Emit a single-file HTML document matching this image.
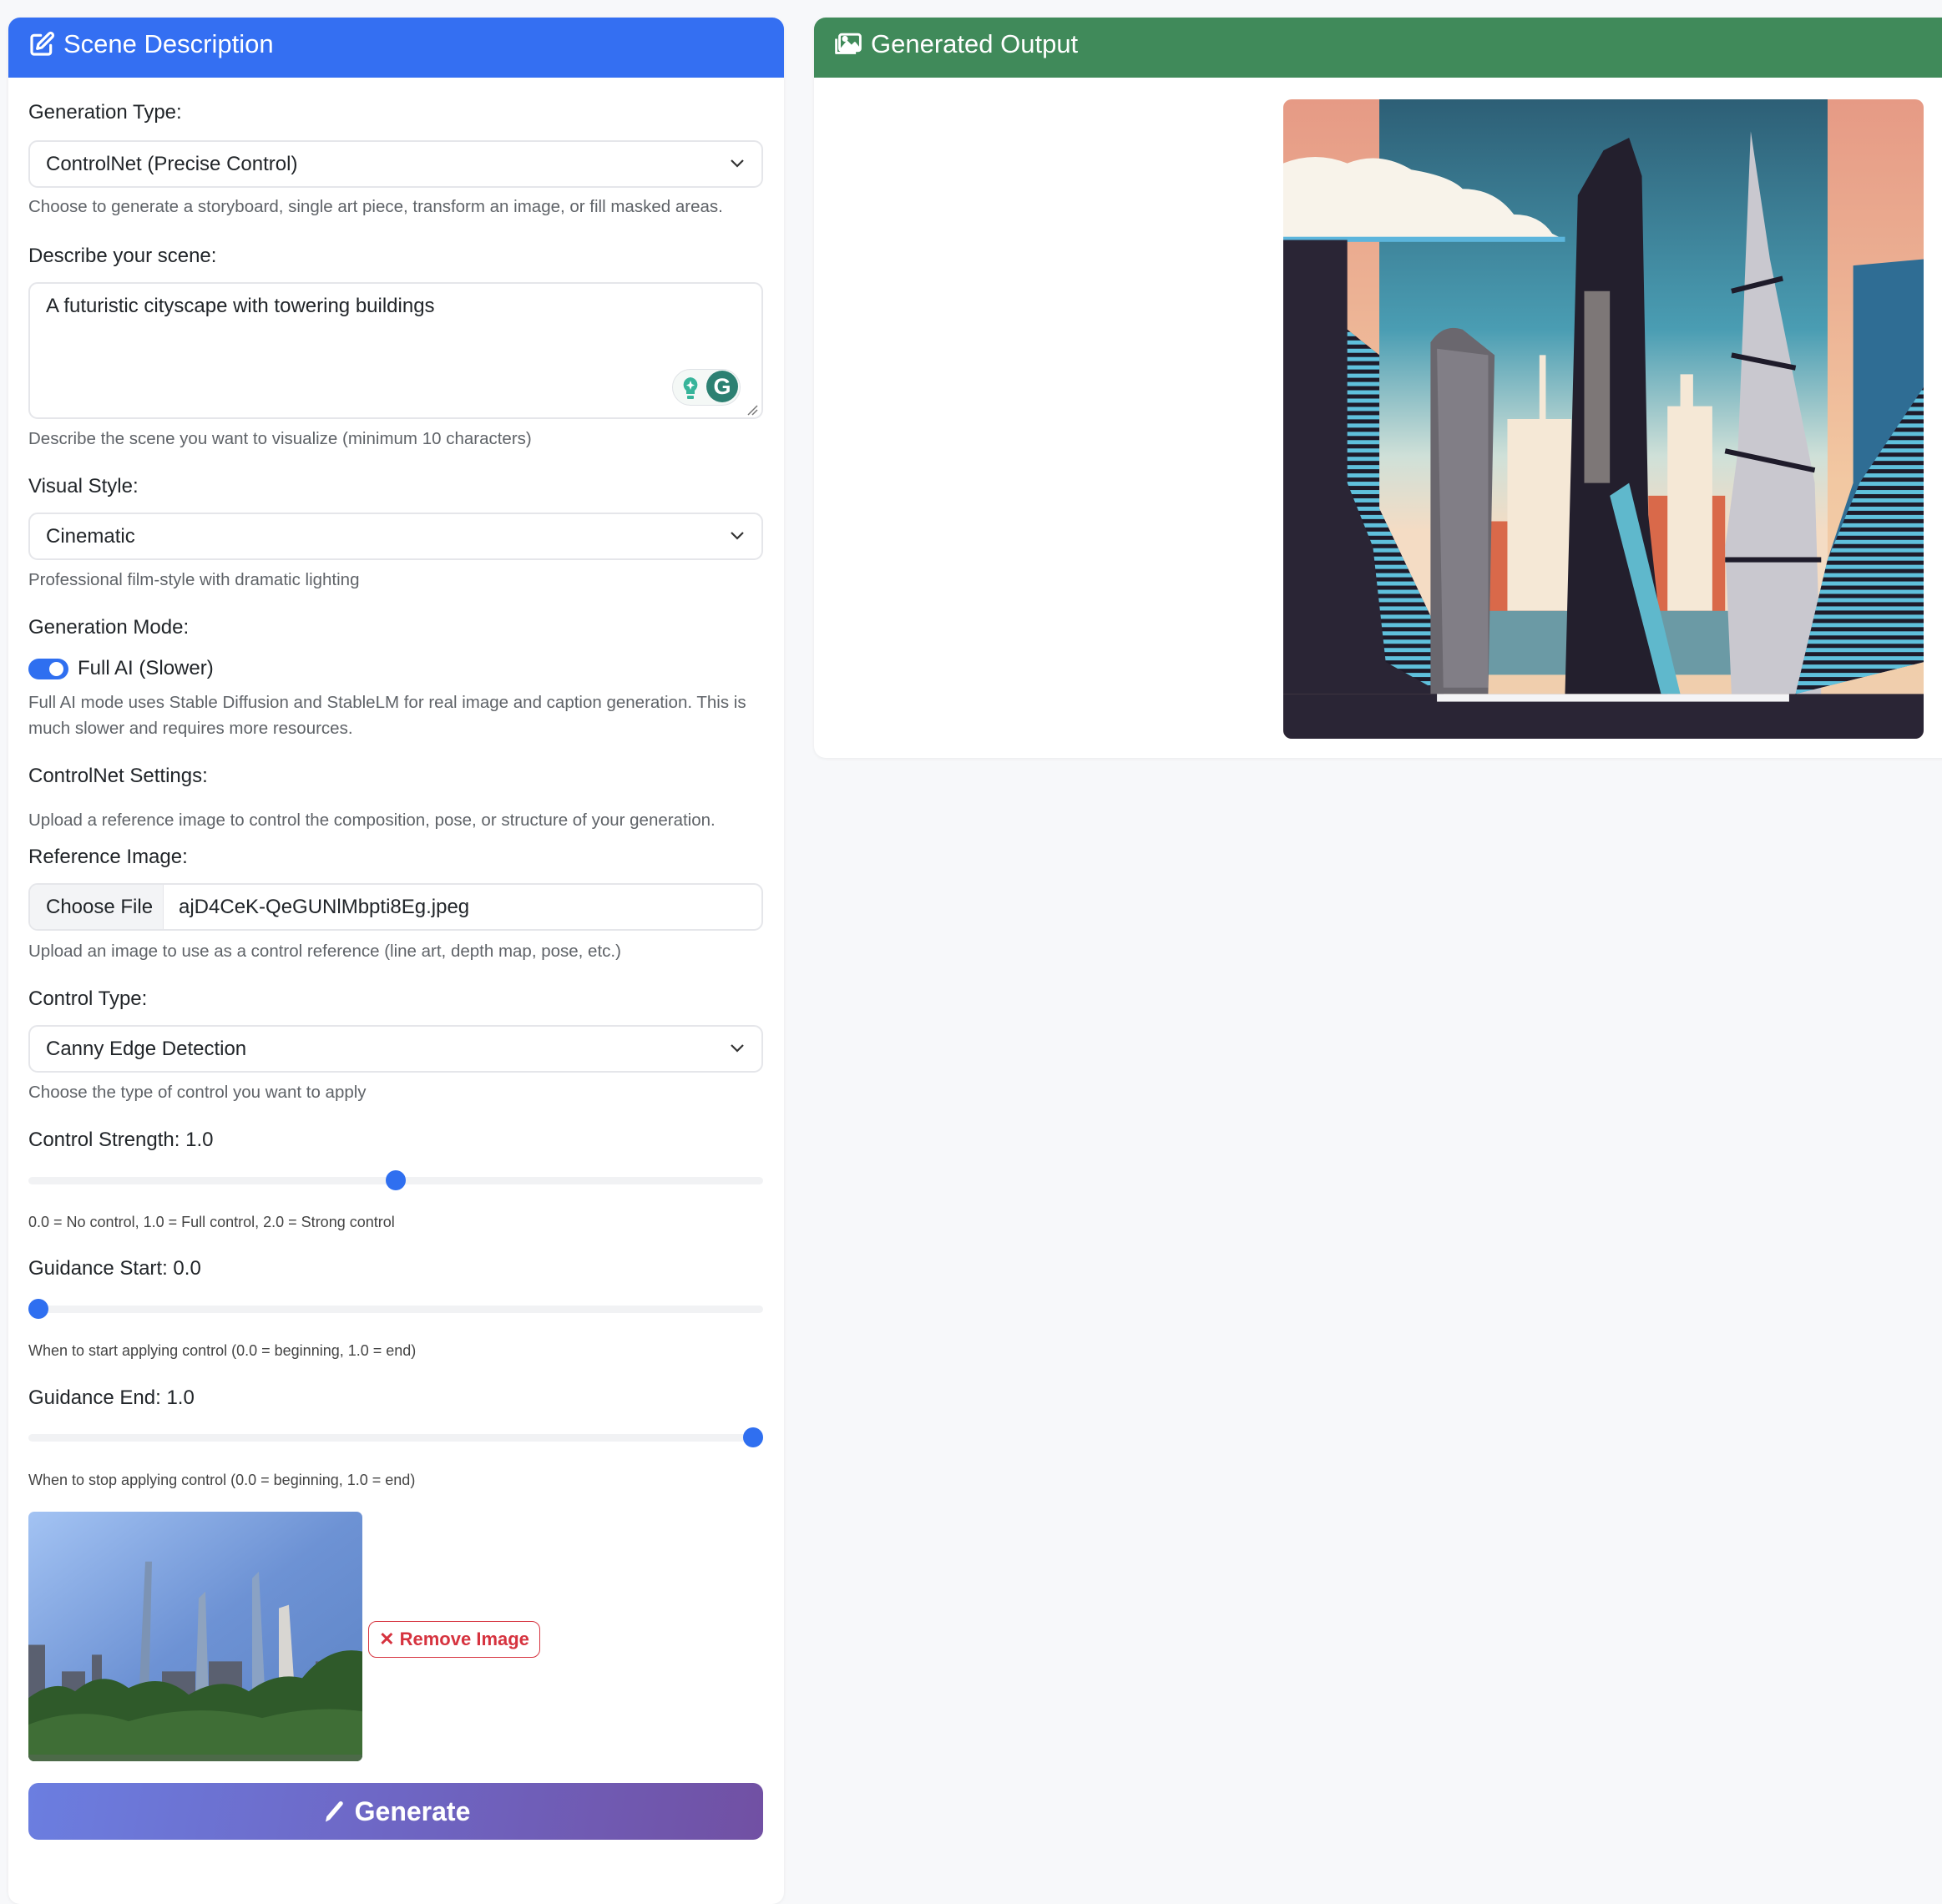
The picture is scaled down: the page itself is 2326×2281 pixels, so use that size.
<!DOCTYPE html>
<html><head><meta charset="utf-8"><style>
*{box-sizing:border-box;margin:0;padding:0}
body{width:2326px;height:2230px;background:#f7f8fa;font-family:"Liberation Sans",sans-serif;position:relative;overflow:hidden;color:#212529}
.a{position:absolute;white-space:nowrap}
.panel{position:absolute;background:#fff;border-radius:14px;overflow:hidden;box-shadow:0 1px 4px rgba(0,0,0,.06)}
.hdr{position:absolute;left:0;top:0;right:0;height:72px;color:#fff;font-size:31px;display:flex;align-items:center;padding-left:24px;padding-bottom:8px}
.lbl{font-size:24px;color:#212529}
.help{font-size:20.5px;color:#5f6368}
.sm{font-size:18px;color:#444}
.sel{position:absolute;left:34px;width:880px;height:57px;border:2px solid #e5e6ea;border-radius:11px;font-size:24px;display:flex;align-items:center;padding-left:19px;background:#fff}
.sel svg{position:absolute;right:20px;top:20px}
.track{position:absolute;left:34px;width:880px;height:9px;background:#f1f2f4;border-radius:5px}
.thumb{position:absolute;width:24px;height:24px;border-radius:50%;background:#2f6ff0}
</style></head><body>

<div class="panel" style="left:10px;top:21px;width:929px;height:2260px">
 <div class="hdr" style="background:#346ff2">
  <svg width="32" height="32" viewBox="0 0 24 24" fill="none" stroke="#fff" stroke-width="2.4" stroke-linecap="round" stroke-linejoin="round" style="margin-right:10px"><path d="M11 4H5a2 2 0 0 0-2 2v13a2 2 0 0 0 2 2h13a2 2 0 0 0 2-2v-6"/><path d="M18.5 2.5a2.1 2.1 0 0 1 3 3L12 15l-4 1 1-4z"/></svg>
  Scene Description</div>
</div>

<div class="panel" style="left:975px;top:21px;width:1380px;height:887px">
 <div class="hdr" style="background:#408a5a">
  <svg width="34" height="30" viewBox="0 0 26 22" fill="none" stroke="#fff" stroke-width="2.2" stroke-linejoin="round" style="margin-right:10px"><rect x="5" y="2" width="19" height="15" rx="2"/><path d="M2 6v13h18"/><path d="M7 15l5-6 4 4 3-3 4 5z" fill="#fff"/><circle cx="10" cy="6" r="1.6" fill="#fff"/></svg>
  Generated Output</div>
</div>

<svg class="a" style="left:1537px;top:119px;border-radius:10px" width="767" height="766" viewBox="0 0 100 100" preserveAspectRatio="none">
<defs>
<linearGradient id="bg" x1="0" y1="0" x2="0" y2="1"><stop offset="0" stop-color="#e69a85"/><stop offset=".6" stop-color="#f2c8a2"/><stop offset="1" stop-color="#f0d0b0"/></linearGradient>
<linearGradient id="sky" x1="0" y1="0" x2="0" y2="1"><stop offset="0" stop-color="#2d5f76"/><stop offset=".4" stop-color="#4a9db3"/><stop offset=".62" stop-color="#cfe0d8"/><stop offset=".75" stop-color="#f4dcc4"/></linearGradient>
<pattern id="st" width="3" height="1.3" patternUnits="userSpaceOnUse"><rect width="3" height="1.3" fill="#1e1b2a"/><rect width="3" height=".65" fill="#5fc0dc"/></pattern>
</defs>
<rect width="100" height="100" fill="url(#bg)"/>
<rect x="15" y="0" width="70" height="90" fill="url(#sky)"/>
<path d="M0 10 Q5 8 10 10 Q15 8 20 11 Q26 12 28 14 Q33 14 36 18 Q40 18 42 21 L44 22 L0 22z" fill="#f8f3ea"/>
<rect x="0" y="21.5" width="44" height=".8" fill="#5cb5dc"/>
<path d="M32 66h12v20H32z" fill="#d9694a"/><path d="M57 62h12v24H57z" fill="#d9694a"/>
<path d="M35 50h5v-10h1v10h4v30h-10z" fill="#f5e8d6"/><path d="M60 48h2v-5h2v5h3v32h-7z" fill="#f5e8d6"/>
<rect x="32" y="80" width="40" height="10" fill="#6b9aa5"/>
<path d="M0 22 L10 22 L10 36 L15 40 L15 64 L25 85 L25 93 L0 93z" fill="#2a2535"/>
<path d="M10 36 L15 40 L15 64 L25 85 L25 93 L16 88 L14 70 L10 60z" fill="url(#st)"/>
<path d="M23 38 Q25 35 28 36 L33 40 L32 93 L23 93z" fill="#6a676e"/>
<path d="M24 39 L32 40 L32 92 L25 92z" fill="#8c8990" opacity=".7"/>
<path d="M44 93 L46 15 L50 8 L54 6 L56 12 L57 65 L60 93z" fill="#231f2d"/>
<path d="M47 30h4v30h-4z" fill="#b9b2a8" opacity=".6"/>
<path d="M51 62 L54 60 L62 93 L59 93z" fill="#5fb8cc"/>
<path d="M70 93 L69 70 L71 55 L73 5 L76 25 L83 60 L84 93z" fill="#c9c8cf"/>
<path d="M70 30 L78 28 M70 40 L80 42 M69 55 L83 58 M69 72 L84 72" stroke="#1e1b2a" stroke-width=".8"/>
<path d="M89 26 L100 25 L100 88 L80 93 L85 72 L89 60z" fill="#2f6d94"/>
<path d="M100 45 L100 88 L80 93 L85 72 L90 60z" fill="url(#st)"/>
<rect x="0" y="93" width="100" height="7" fill="#2a2535"/>
<rect x="24" y="93" width="55" height="1.2" fill="#f4f4f6"/>
</svg>

<div class="a lbl" style="left:34px;top:121px">Generation Type:</div>
<div class="sel" style="top:168px">ControlNet (Precise Control)<svg width="18" height="12" viewBox="0 0 18 12"><path d="M2 2l7 7 7-7" fill="none" stroke="#333" stroke-width="2.2"/></svg></div>
<div class="a help" style="left:34px;top:236px">Choose to generate a storyboard, single art piece, transform an image, or fill masked areas.</div>

<div class="a lbl" style="left:34px;top:293px">Describe your scene:</div>
<div class="a" style="left:34px;top:338px;width:880px;height:164px;border:2px solid #e5e6ea;border-radius:11px;background:#fff"></div>
<div class="a" style="left:55px;top:353px;font-size:24px">A futuristic cityscape with towering buildings</div>
<div class="a" style="left:805px;top:442px;width:82px;height:44px;border:1.5px solid #dfe2e6;border-radius:22px;background:#f4f8f6"></div>
<svg class="a" style="left:816px;top:450px" width="22" height="30" viewBox="0 0 22 30"><path d="M11 2a9 9 0 0 0-5 16v4h10v-4A9 9 0 0 0 11 2z" fill="#37b49a"/><rect x="7" y="24" width="8" height="4" rx="1" fill="#37b49a"/><path d="M11 6l1.5 4 3.5 1.5-3.5 1.5L11 17l-1.5-4L6 11.5 9.5 10z" fill="#fff"/></svg>
<div class="a" style="left:846px;top:444px;width:38px;height:38px;border-radius:50%;background:#2c8072;color:#fff;font-weight:bold;font-size:27px;text-align:center;line-height:38px">G</div>
<svg class="a" style="left:894px;top:484px" width="14" height="14"><path d="M2 13L13 2M7 13L13 7" stroke="#777" stroke-width="1.5"/></svg>
<div class="a help" style="left:34px;top:514px">Describe the scene you want to visualize (minimum 10 characters)</div>

<div class="a lbl" style="left:34px;top:569px">Visual Style:</div>
<div class="sel" style="top:614px">Cinematic<svg width="18" height="12" viewBox="0 0 18 12"><path d="M2 2l7 7 7-7" fill="none" stroke="#333" stroke-width="2.2"/></svg></div>
<div class="a help" style="left:34px;top:683px">Professional film-style with dramatic lighting</div>

<div class="a lbl" style="left:34px;top:738px">Generation Mode:</div>
<div class="a" style="left:34px;top:789px;width:48px;height:25px;border-radius:13px;background:#2f6ff0"></div>
<div class="a" style="left:59px;top:793px;width:17px;height:17px;border-radius:50%;background:#fff"></div>
<div class="a lbl" style="left:93px;top:787px">Full AI (Slower)</div>
<div class="a help" style="left:34px;top:826px;line-height:31px;white-space:normal;width:890px">Full AI mode uses Stable Diffusion and StableLM for real image and caption generation. This is much slower and requires more resources.</div>

<div class="a lbl" style="left:34px;top:916px">ControlNet Settings:</div>
<div class="a help" style="left:34px;top:971px">Upload a reference image to control the composition, pose, or structure of your generation.</div>

<div class="a lbl" style="left:34px;top:1013px">Reference Image:</div>
<div class="a" style="left:34px;top:1058px;width:880px;height:57px;border:2px solid #e5e6ea;border-radius:11px;background:#fff;overflow:hidden">
 <div style="position:absolute;left:0;top:0;width:160px;height:100%;background:#f3f4f6;border-right:1.5px solid #e5e6ea;font-size:24px;line-height:53px;padding-left:19px">Choose File</div>
 <div style="position:absolute;left:178px;top:0;font-size:24px;line-height:53px">ajD4CeK-QeGUNlMbpti8Eg.jpeg</div>
</div>
<div class="a help" style="left:34px;top:1128px">Upload an image to use as a control reference (line art, depth map, pose, etc.)</div>

<div class="a lbl" style="left:34px;top:1183px">Control Type:</div>
<div class="sel" style="top:1228px">Canny Edge Detection<svg width="18" height="12" viewBox="0 0 18 12"><path d="M2 2l7 7 7-7" fill="none" stroke="#333" stroke-width="2.2"/></svg></div>
<div class="a help" style="left:34px;top:1297px">Choose the type of control you want to apply</div>

<div class="a lbl" style="left:34px;top:1352px">Control Strength: 1.0</div>
<div class="track" style="top:1410px"></div><div class="thumb" style="left:462px;top:1402px"></div>
<div class="a sm" style="left:34px;top:1454px">0.0 = No control, 1.0 = Full control, 2.0 = Strong control</div>

<div class="a lbl" style="left:34px;top:1506px">Guidance Start: 0.0</div>
<div class="track" style="top:1564px"></div><div class="thumb" style="left:34px;top:1556px"></div>
<div class="a sm" style="left:34px;top:1608px">When to start applying control (0.0 = beginning, 1.0 = end)</div>

<div class="a lbl" style="left:34px;top:1661px">Guidance End: 1.0</div>
<div class="track" style="top:1718px"></div><div class="thumb" style="left:890px;top:1710px"></div>
<div class="a sm" style="left:34px;top:1763px">When to stop applying control (0.0 = beginning, 1.0 = end)</div>

<svg class="a" style="left:34px;top:1811px;border-radius:7px" width="400" height="299" viewBox="0 0 100 75" preserveAspectRatio="none">
<defs><linearGradient id="ps" x1="0" y1="0" x2="1" y2="1"><stop offset="0" stop-color="#a3c3f3"/><stop offset=".5" stop-color="#6d92d4"/><stop offset="1" stop-color="#5b82c4"/></linearGradient></defs>
<rect width="100" height="75" fill="url(#ps)"/>
<path d="M33 58 L35 15 L37 15 L36 58z" fill="#7c93b4"/>
<path d="M67 58 L67 20 L69 18 L71 58z" fill="#8aa2c4"/>
<path d="M50 58 L51 26 L53 24 L54 58z" fill="#8ea3bf"/>
<path d="M75 58 L75 29 L78 28 L80 58z" fill="#d8d6d2"/>
<path d="M0 40h5v20H0z M10 48h7v12h-7z M19 43h3v17h-3z M40 48h10v12H40z M54 45h10v15H54z M86 45h4v15h-4z" fill="#5a6070"/>
<path d="M0 75 L0 56 Q8 50 14 54 Q22 47 30 53 Q40 48 48 55 Q58 49 66 54 Q74 48 82 50 Q90 40 100 42 L100 75z" fill="#2f5a2a"/>
<path d="M0 75 L0 64 Q15 58 30 63 Q50 57 70 62 Q85 58 100 60 L100 75z" fill="#3f6e36"/>
<rect x="0" y="73" width="100" height="2" fill="#4c6a48"/>
</svg>

<div class="a" style="left:441px;top:1942px;width:206px;height:44px;border:1.5px solid #d6333f;border-radius:10px;color:#d6333f;font-weight:bold;font-size:22px;line-height:41px;text-align:center">✕ Remove Image</div>

<div class="a" style="left:34px;top:2136px;width:880px;height:68px;border-radius:12px;background:linear-gradient(100deg,#6b7ee0,#6e66c4 50%,#7150a3);color:#fff;font-weight:bold;font-size:32px;display:flex;align-items:center;justify-content:center">
 <svg width="30" height="30" viewBox="0 0 24 24" style="margin-right:10px"><path d="M4 22l1-5L17 3a2 2 0 0 1 3 3L8 20z" fill="#fff"/></svg>Generate</div>

</body></html>
